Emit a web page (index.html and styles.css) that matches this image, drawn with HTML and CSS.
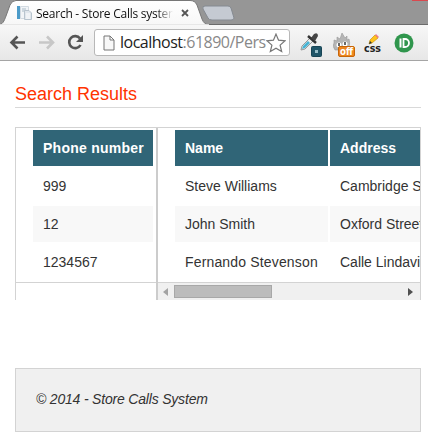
FILE: index.html
```
<!DOCTYPE html>
<html lang="en">
<head>
<meta charset="utf-8">
<title>Search - Store Calls system</title>
<link rel="stylesheet" href="styles.css">
</head>
<body>
<header class="browser">
  <div class="tabs">
    <svg class="tab-shape" width="428" height="25" viewBox="0 0 428 25">
      <defs><linearGradient id="tab" x1="0" y1="0" x2="0" y2="1"><stop offset="0" stop-color="#fff"/><stop offset="1" stop-color="#f7f7f7"/></linearGradient></defs>
      <path d="M0 24.5H428" stroke="#6b6b6b"/>
      <path d="M-3 25C3 25 4 21 6 16L10 5Q12 .5 16 .5H190Q195 .5 197 5L202 19Q204 24.5 209 25Z" fill="url(#tab)" stroke="#777"/>
      <path d="M-3 25H209" stroke="#f7f7f7" stroke-width="1.5"/>
      <path d="M205 6H228Q230 6 231 8L234 18Q234 20 231 20H212Q209 20 208 18L203 9Q202 6 205 6Z" fill="#c5cad2" stroke="#858a91"/>
      <path d="M412 .5H428" stroke="#d9494f"/>
    </svg>
    <div class="tab">
      <svg width="16" height="16" viewBox="0 0 16 16"><path d="M1 1H4V14H1Z" fill="#4c9bc9"/><path d="M4.5 1.5H12.5V13.5H4.5Z" fill="#f1f4f7" stroke="#d2dae1"/><path d="M6 4H10M6 6H9" stroke="#a9bac6"/><path d="M8.5 5.5H13L15.5 8V14.5H8.5Z" fill="#e0e6ec" stroke="#b8c4ce"/><path d="M10 9H14M10 11H14M10 13H14" stroke="#fff"/></svg>
      <span class="tab-title">Search - Store Calls system</span>
      <svg class="close" width="8" height="8" viewBox="0 0 8 8"><path d="M1 1L7 7M7 1L1 7" stroke="#555" stroke-width="1.8"/></svg>
    </div>
  </div>
  <div class="toolbar">
    <svg class="nav" width="88" height="35" viewBox="0 0 88 35">
      <g fill="none" stroke-width="2.6"><path d="M25 17.5H12M17.5 11.5L11.5 17.5L17.5 23.5" stroke="#555"/><path d="M39 17.5H52M47 11.5L53 17.5L47 23.5" stroke="#c7c7c7"/><path d="M80 13.5A6 6 0 1 0 80.5 20" stroke="#555"/></g>
      <path d="M83 10V17H76Z" fill="#555"/>
    </svg>
    <div class="address">
      <svg width="12" height="16" viewBox="0 0 12 16"><path d="M1 1H7L11 5V15H1ZM7 1V5H11" fill="#f8f8f8" stroke="#777"/></svg>
      <span class="url">localhost<span>:61890/Pers</span></span>
      <svg class="star" width="20" height="20" viewBox="0 0 18 18"><path d="M9 1L11.3 6.5L17.2 7L12.7 10.9L14.1 16.7L9 13.6L3.9 16.7L5.3 10.9L.8 7L6.7 6.5Z" fill="#fff" stroke="#777" stroke-width="1.1"/></svg>
    </div>
    <div class="extensions">
      <svg width="24" height="26" viewBox="0 0 24 26"><path d="M2 18L3 14L12 5L15 8L6 17Z" fill="#eee" stroke="#999"/><path d="M3 17L4 14L9 9L11 11L6 16Z" fill="#48b3d3"/><path d="M9 4L17 11" stroke="#333" stroke-width="2.5"/><path d="M12 6L15 2Q19 0 19 4L16 9Z" fill="#454545"/><rect x="12.5" y="14.5" width="10" height="10" rx="1" fill="#205568" stroke="#174454"/><rect x="16" y="18" width="3" height="3" fill="#98bec8"/></svg>
      <svg class="flame" width="24" height="26" viewBox="0 0 24 26"><path d="M2 18Q-1 14 1 11V8L4 9V5L7 7L9 1L12 6L14 4V8L16 7Q18 14 14 18Z" fill="#b5b5b5" stroke="#999" stroke-width=".6"/><circle cx="6" cy="13" r="2.5" fill="#fff"/><circle cx="12" cy="12" r="2.5" fill="#fff"/><path d="M6 11V14M12 10V13" stroke="#444" stroke-width="1.6"/><rect x="5.5" y="14.5" width="16" height="10" rx="1.5" fill="#ed861e" stroke="#c76508"/><text class="off" x="7" y="23" textLength="13" lengthAdjust="spacingAndGlyphs">off</text></svg>
      <svg class="css" width="20" height="26" viewBox="0 0 20 26"><path d="M6 12L7 8L12 3L15 6L9 11Z" fill="#ffc31d" stroke="#c18900" stroke-width=".6"/><path d="M12 3L13 2L16 5L15 6Z" fill="#f0788a"/><path d="M6 12L7 9L9 11Z" fill="#333"/><text class="css-label" x="1" y="20" textLength="17" lengthAdjust="spacingAndGlyphs">css</text></svg>
      <svg class="bullet" width="20" height="20" viewBox="0 0 20 20"><circle cx="10" cy="10" r="9.5" fill="#30964d"/><path d="M6.5 5.5V14.5" stroke="#fff" stroke-width="2"/><path d="M9.5 6H11A4 4 0 0 1 11 14H9.5Z" fill="none" stroke="#fff" stroke-width="1.8"/></svg>
    </div>
  </div>
</header>
<main>
  <h1><span>Search Results</span></h1>
  <section class="results">
    <div class="fixed">
      <div class="fixed-body">
        <table><thead><tr><th>Phone number</th></tr></thead><tbody><tr><td>999</td></tr><tr><td>12</td></tr><tr><td>1234567</td></tr></tbody></table>
      </div>
    </div>
    <div class="scrolling">
      <table><thead><tr><th>Name</th><th>Address</th></tr></thead><tbody><tr><td>Steve Williams</td><td>Cambridge St</td></tr><tr><td>John Smith</td><td>Oxford Street</td></tr><tr><td class="wide">Fernando Stevenson</td><td>Calle Lindavista</td></tr></tbody></table>
      <div class="scrollbar"><svg width="5" height="8" viewBox="0 0 5 8"><path d="M5 0V8L0 4Z" fill="#a3a3a3"/></svg><i></i><svg class="right" width="5" height="8" viewBox="0 0 5 8"><path d="M0 0V8L5 4Z" fill="#505050"/></svg></div>
    </div>
  </section>
  <footer>© 2014 - Store Calls System</footer>
</main>
</body>
</html>
```
FILE: styles.css
```
* { box-sizing: border-box; }
body { margin: 0; width: 428px; height: 439px; overflow: hidden; background: #fff; font: 14px "Liberation Sans", Arial, sans-serif; color: #333; }
svg { display: block; flex: none; }
.browser { height: 61px; }
.tabs { position: relative; height: 25px; background: #969696; }
.tab-shape { position: absolute; inset: 0; }
.tab { position: relative; display: flex; align-items: center; height: 25px; padding: 1px 0 0 16px; }
.tab-title { width: 137px; margin-left: 4px; overflow: hidden; white-space: nowrap; font: 12px "Open Sans", sans-serif; letter-spacing: -.25px; color: #111; mask-image: linear-gradient(90deg, #000 88%, transparent 100%); }
.close { margin-left: 8px; }
.toolbar { display: flex; height: 36px; background: linear-gradient(#f7f7f7, #e7e7e7); border-bottom: 1px solid #a5a5a5; }
.nav { margin-right: 6px; }
.address { display: flex; align-items: center; width: 196px; height: 27px; margin-top: 4px; padding-left: 8px; background: #fff; border: 1px solid #b8b8b8; border-radius: 3px; }
.url { width: 146px; margin-left: 5px; white-space: nowrap; font: 16px/25px "Open Sans", sans-serif; color: #222; letter-spacing: -.5px; }
.url span { color: #888; }
.extensions { display: flex; padding-top: 7px; margin-left: 9px; }
.flame { margin-left: 10px; }
.css { margin-left: 6px; }
.bullet { margin: 1px 0 0 11px; }
.off { font: bold 10px "DejaVu Sans", sans-serif; fill: #fff; }
.css-label { font: bold 10px "DejaVu Sans", sans-serif; fill: #222; }
main { padding: 0 7px 0 15px; }
h1 { height: 47px; margin: 0; padding-top: 22px; border-bottom: 1px solid #d9d9d9; font-size: 18px; line-height: 22px; font-weight: 400; color: #ff3300; }
.results { display: flex; width: 406px; height: 173px; margin-top: 19px; border: 1px solid #d3d3d3; border-bottom: 0; overflow: hidden; }
.fixed { width: 142px; height: 172px; border-right: 2px solid #ccc; flex: none; }
.fixed-body { height: 155px; padding-left: 15px; border-bottom: 1px solid #d3d3d3; }
.scrolling { width: 262px; height: 172px; padding-left: 15px; overflow: hidden; }
table { border-collapse: separate; border-spacing: 2px; table-layout: fixed; width: 124px; }
.scrolling table { width: 312px; }
th, td { height: 36px; padding: 0 10px; text-align: left; white-space: nowrap; }
th { background: #306577; color: #fff; font-weight: 700; }
.fixed th { letter-spacing: .25px; }
.wide { letter-spacing: .16px; }
.scrolling th:first-child { width: 153px; }
tbody tr:nth-child(even) td { background: #f8f8f8; }
.scrollbar { display: flex; align-items: center; height: 18px; margin-left: -15px; padding: 0 7px 0 5px; background: #f0f0f0; border-top: 1px solid #d3d3d3; }
.scrollbar i { width: 98px; height: 13px; margin-left: 6px; background: #bcbcbc; border: 1px solid #a8a8a8; }
.right { margin-left: auto; }
footer { height: 64px; margin-top: 68px; padding-left: 20px; border: 1px solid #d3d3d3; background: #f0f0f0; font-size: 14px; line-height: 60px; font-style: italic; letter-spacing: -.19px; }
```
